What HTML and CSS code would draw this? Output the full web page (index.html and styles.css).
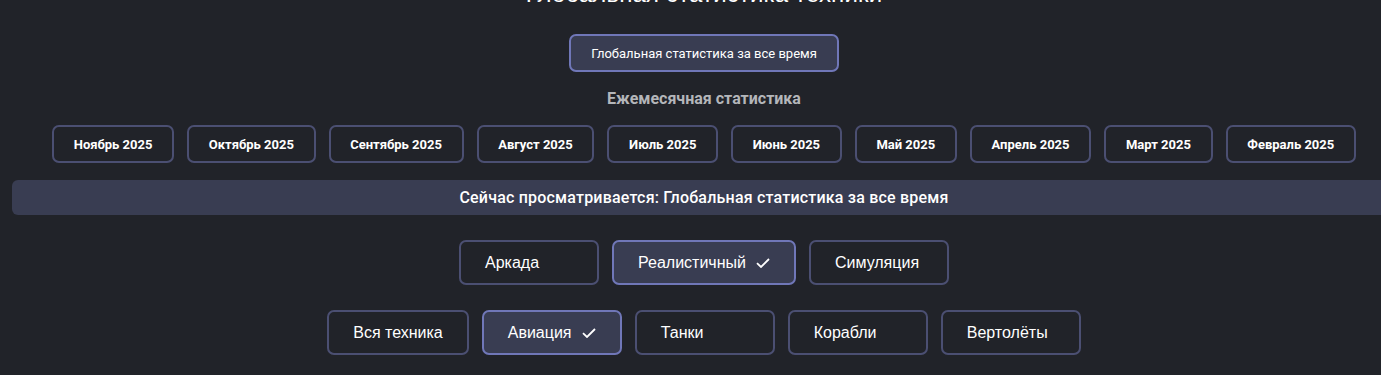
FILE: index.html
```html
<!DOCTYPE html>
<html lang="ru">
<head>
  <meta charset="UTF-8" />
  <title>Глобальная статистика техники</title>
  <link rel="stylesheet" href="styles.css">
</head>
<body>
  <div class="page">
    <h2 class="title">Глобальная статистика техники</h2>

    <div class="global-row">
      <button class="global-btn">Глобальная статистика за все время</button>
    </div>

    <h4 class="monthly-title">Ежемесячная статистика</h4>
    <div class="months">
      <button class="month-btn">Ноябрь 2025</button>
      <button class="month-btn">Октябрь 2025</button>
      <button class="month-btn">Сентябрь 2025</button>
      <button class="month-btn">Август 2025</button>
      <button class="month-btn">Июль 2025</button>
      <button class="month-btn">Июнь 2025</button>
      <button class="month-btn">Май 2025</button>
      <button class="month-btn">Апрель 2025</button>
      <button class="month-btn">Март 2025</button>
      <button class="month-btn">Февраль 2025</button>
    </div>

    <div class="current">Сейчас просматривается: Глобальная статистика за все время</div>

    <!-- Game mode -->
    <div class="tabs">
      <button class="tab">Аркада</button>
      <button class="tab active">Реалистичный <svg class="check" viewBox="0 0 14 10"><path d="M1 5.2 L5 9 L13 1" /></svg></button>
      <button class="tab">Симуляция</button>
    </div>

    <!-- Vehicle type -->
    <div class="tabs">
      <button class="tab">Вся техника</button>
      <button class="tab active">Авиация <svg class="check" viewBox="0 0 14 10"><path d="M1 5.2 L5 9 L13 1" /></svg></button>
      <button class="tab">Танки</button>
      <button class="tab">Корабли</button>
      <button class="tab">Вертолёты</button>
    </div>
  </div>
</body>
</html>
```

FILE: styles.css
```css
body { margin: 0; background: #212329; color: #fff; font-family: Roboto, "Liberation Sans", Arial, sans-serif; overflow: hidden; }
.page { width: 1384px; margin: -20px 0 0 12px; }
button { font-family: inherit; color: #fff; cursor: pointer; }

.title { margin: 0; height: 54px; font-size: 24px; font-weight: 400; line-height: 28px; letter-spacing: 0.15px; text-align: center; font-family: "Liberation Sans", Arial, sans-serif; }

.global-row { display: flex; justify-content: center; }
.global-btn { height: 38px; padding: 0 20px; background: #393d52; border: 2px solid #7077b8; border-radius: 7px; font-size: 13px; }

.monthly-title { margin: 17px 0 0; height: 36px; font-size: 16px; font-weight: 700; color: #b4b6ba; text-align: center; line-height: 19px; }

.months { display: flex; justify-content: center; gap: 13px; }
.month-btn { height: 38px; padding: 0 19.7px; background: transparent; border: 2px solid #4b4f72; border-radius: 7px; font-size: 13px; font-weight: 700; }

.current { margin-top: 17px; height: 35px; line-height: 35px; background: #393d52; border-radius: 6px; text-align: center; font-size: 16px; font-weight: 500; letter-spacing: 0.2px; }

.tabs { display: flex; justify-content: center; gap: 13px; margin-top: 25px; }
.tab { display: flex; align-items: center; gap: 10px; min-width: 140px; height: 45px; padding: 0 24px; background: transparent; border: 2px solid #4b4f72; border-radius: 7px; font-family: "Liberation Sans", Arial, sans-serif; font-size: 16px; }
.tab.active { background: #393d52; border-color: #7077b8; }
.check { width: 14px; height: 10px; fill: none; stroke: #fff; stroke-width: 1.8; }
```
